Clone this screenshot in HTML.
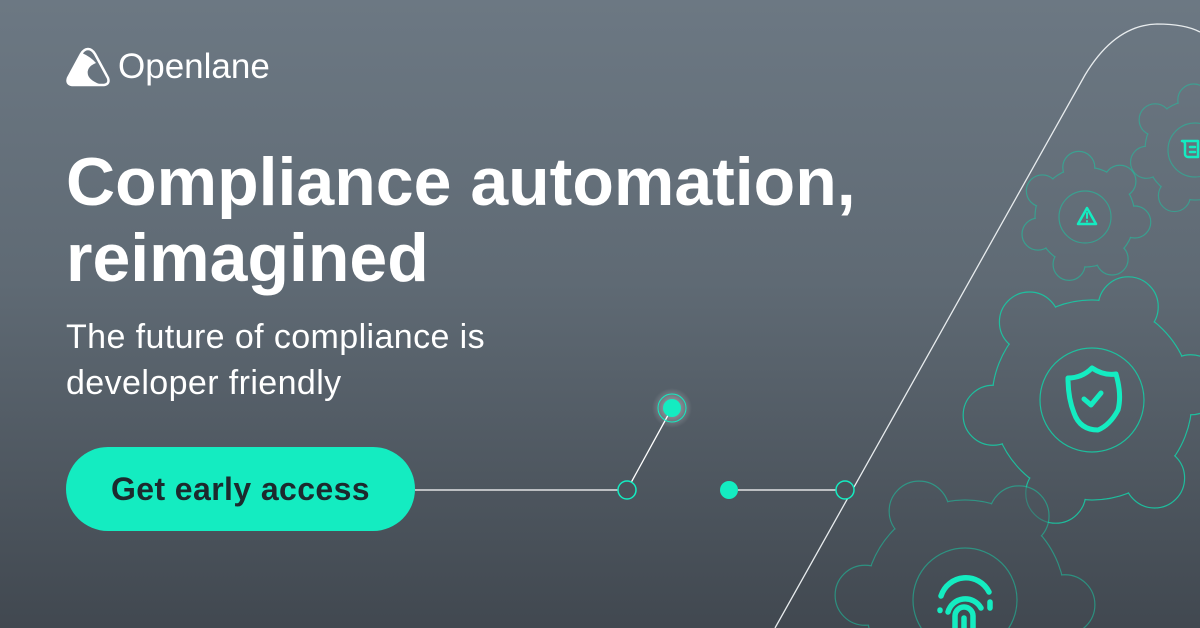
<!DOCTYPE html>
<html><head><meta charset="utf-8"><style>
html,body{margin:0;padding:0}
body{width:1200px;height:628px;overflow:hidden;position:relative;background:linear-gradient(180deg,#6c7883 0%,#5f6a74 45%,#414850 100%);font-family:"Liberation Sans",sans-serif;color:#fff}
.logo{position:absolute;left:66px;top:47px;display:flex;align-items:center}
.logo span{font-size:35px;margin-left:8px}
h1{position:absolute;left:66px;top:144px;margin:0;font-size:68px;line-height:76px;font-weight:bold;letter-spacing:0}
p{position:absolute;left:66px;top:314px;margin:0;font-size:34px;line-height:46px;letter-spacing:0.4px}
.btn{position:absolute;left:66px;top:447px;width:349px;height:84px;border-radius:42px;background:#14ecc1;color:#1c2a2e;font-size:32px;font-weight:bold;display:flex;align-items:center;justify-content:center;letter-spacing:0.4px}
svg.bg{position:absolute;left:0;top:0;overflow:hidden}
</style></head><body>
<svg class="bg" width="1200" height="628" viewBox="0 0 1200 628">
<defs>
<linearGradient id="g" gradientUnits="userSpaceOnUse" x1="0" y1="0" x2="0" y2="628">
<stop offset="0" stop-color="#6c7883"/><stop offset="0.45" stop-color="#5f6a74"/><stop offset="1" stop-color="#414850"/></linearGradient>
<radialGradient id="glow"><stop offset="0" stop-color="#fff" stop-opacity=".5"/><stop offset="1" stop-color="#fff" stop-opacity="0"/></radialGradient>
</defs>
<path d="M775 628 L1085 75 Q1115 25 1157 24 Q1185 24 1200 32" fill="none" stroke="#e8ecee" stroke-width="1.3"/>
<g id="gears" stroke="#19c9a4" stroke-width="1.2" fill="url(#g)">
</g>
<line x1="415" y1="490" x2="627" y2="490" stroke="#fff" stroke-width="1.3"/>
<line x1="627" y1="490" x2="672" y2="408" stroke="#fff" stroke-width="1.3"/>
<line x1="729" y1="490" x2="845" y2="490" stroke="#fff" stroke-width="1.3"/>
<circle cx="627" cy="490" r="9" fill="#4a525a" stroke="#14ecc1" stroke-width="1.5"/>
<circle cx="845" cy="490" r="9" fill="#4a525a" stroke="#14ecc1" stroke-width="1.5"/>
<circle cx="729" cy="490" r="9" fill="#14ecc1"/>
<circle cx="672" cy="408" r="20" fill="url(#glow)"/>
<circle cx="672" cy="408" r="14" fill="none" stroke="#14ecc1" stroke-width="1"/>
<circle cx="672" cy="408" r="9" fill="#14ecc1"/>
</svg>
<script>
(function(){
var g=document.getElementById('gears');var ns='http://www.w3.org/2000/svg';
function gear(cx,cy,R,br,n,off,ir,op){
 var grp=document.createElementNS(ns,'g');grp.setAttribute('opacity',op);g.appendChild(grp);
 function e(t,a){var x=document.createElementNS(ns,t);for(var k in a)x.setAttribute(k,a[k]);grp.appendChild(x);}
 e('circle',{cx:cx,cy:cy,r:R});
 for(var i=0;i<n;i++){var a=off+i*2*Math.PI/n;e('circle',{cx:cx+R*Math.cos(a),cy:cy+R*Math.sin(a),r:br});}
 e('circle',{cx:cx,cy:cy,r:R-0.8,stroke:'none'});
 e('circle',{cx:cx,cy:cy,r:ir,fill:'none'});
}
gear(1195,150,50,16,7,0.2,27,0.5);
gear(1085,217,50,16,7,0.1,26,0.55);
gear(1092,400,100,30,6,-1.2,52,0.9);
gear(965,600,100,30,6,-1.0,52,0.55);
})();
</script>
<svg class="bg" width="1200" height="628" viewBox="0 0 1200 628" fill="none" stroke="#14ecc1" stroke-linecap="round" stroke-linejoin="round">
<path d="M1078 224 L1087 208 L1096 224 Z" stroke-width="2.5"/><path d="M1087 213 v5 M1087 221 v.5" stroke-width="2"/>
<path d="M1186 141 h12 v16 h-10 a3 3 0 0 1-3-3 v-10 a3 3 0 0 0-3-3 h4 M1190 147 h5 M1190 152 h5" stroke-width="2.5"/>
<path d="M1068 378 Q1082 378 1092 368 Q1104 376 1116 374 Q1122 395 1118 410 Q1110 425 1098 430 Q1080 430 1074 413 Q1068 398 1068 378 Z" stroke-width="5"/>
<path d="M1084 399 l7 6 l10 -12" stroke-width="5"/>
<path d="M941 596 a26 26 0 0 1 48 -4 M948 612 a18 18 0 0 1 33 -4 M955 628 v-12 a9 9 0 0 1 18 0 v12 M964 628 v-10 M990 602 v6 M940 610 v.5" stroke-width="5.5"/>
</svg>
<div class="logo">
<svg width="44" height="40" viewBox="0 0 44 40"><path d="M22 2 Q18 2 15 7 L2 31 Q0 37 6 38 L38 38 Q44 37 42 31 L29 7 Q26 2 22 2 Z" fill="none" stroke="#fff" stroke-width="2.5"/><path d="M16 6 Q25 10 30 16 Q20 20 22 28 Q24 34 36 38 L6 38 Q0 37 2 31 Z" fill="#fff"/></svg>
<span>Openlane</span></div>
<h1>Compliance automation,<br>reimagined</h1>
<p>The future of compliance is<br>developer friendly</p>
<div class="btn">Get early access</div>
</body></html>
